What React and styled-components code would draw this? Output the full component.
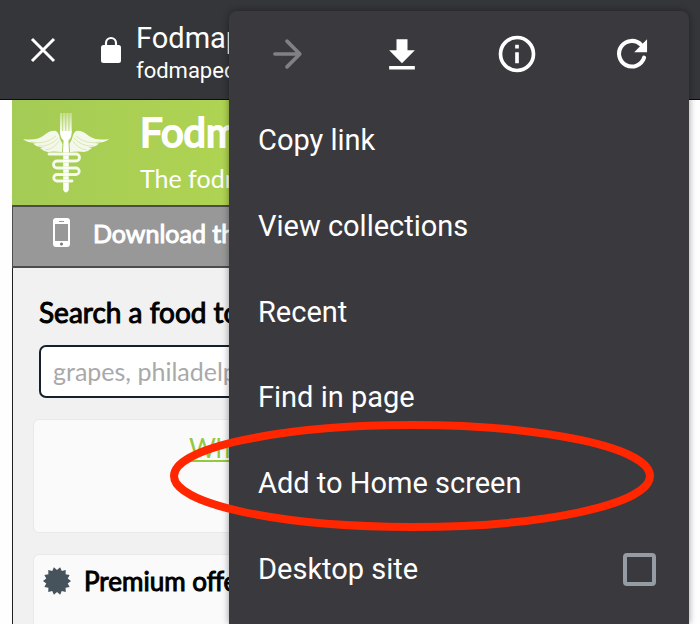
import styled, { createGlobalStyle } from 'styled-components';

const GlobalStyle = createGlobalStyle`
  * {
    box-sizing: border-box;
  }
  body {
    margin: 0;
    background-color: #fefefe;
    font-family: Lato, "Liberation Sans", sans-serif;
  }
  button {
    border: 0;
    padding: 0;
    background: none;
    color: inherit;
    font: inherit;
    cursor: pointer;
  }
  svg {
    display: block;
    flex: none;
  }
`

const Shell = styled.div`
  position: relative;
  height: 100vh;
  display: flex;
  flex-direction: column;
  overflow: hidden;
`

const BrowserBar = styled.header`
  flex: none;
  display: flex;
  align-items: center;
  height: 100px;
  padding: 0 30px;
  border-bottom: 1px solid #0c0c10;
  background-color: #353639;
  color: #fff;
  font-family: Roboto, sans-serif;
  white-space: nowrap;
`

const CloseButton = styled.button`
  margin-right: 44px;
`

const PageInfo = styled.div`
  margin-left: 14px;
  padding-top: 6px;
  .title {
    font-size: 29px;
    line-height: 36px;
  }
  .host {
    font-size: 22px;
    line-height: 30px;
  }
`

const Site = styled.div`
  flex: 1;
  min-height: 0;
  display: flex;
  flex-direction: column;
  margin: 0 12px;
  background-color: #f1f1f1;
  white-space: nowrap;
`

const Banner = styled.div`
  flex: none;
  display: flex;
  height: 105px;
  padding: 8px 11px;
  gap: 31px;
  background: linear-gradient(90deg, #a4cb55, #b0d452 240px);
  color: #fff;
  h1 {
    margin: 0;
    font-size: 40px;
    font-weight: 400;
    line-height: 48px;
    -webkit-text-stroke: 2px #fff;
  }
  p {
    margin: 0;
    font-size: 25px;
    line-height: 44px;
  }
`

const AppStrip = styled.a`
  flex: none;
  display: flex;
  align-items: center;
  height: 63px;
  padding: 0 40px 8px;
  gap: 22px;
  border: solid #4c4c4c;
  border-width: 2px 0 2px 1px;
  background-color: #989898;
  color: #fff;
  font-size: 25px;
  text-decoration: none;
  -webkit-text-stroke: 1px #fff;
`

const Content = styled.main`
  flex: 1;
  min-height: 0;
  display: flex;
  flex-direction: column;
  gap: 21px;
  padding: 27px 20px 0;
  border-left: 1px solid #222;
  overflow: hidden;
`

const SearchForm = styled.form`
  flex: none;
  display: flex;
  flex-direction: column;
  padding: 0 6px;
  label {
    margin-bottom: 16px;
    color: #000;
    font-size: 28px;
    line-height: 34px;
    -webkit-text-stroke: 1px #000;
  }
  input {
    height: 53px;
    padding: 0 12px 2px;
    border: 2px solid #16202c;
    border-radius: 7px;
    background-color: #fff;
    font: 25px Lato, sans-serif;
  }
  input::placeholder {
    color: #a9a9a9;
  }
`

const Card = styled.section`
  flex: none;
  height: 114px;
  padding: 11px 9px;
  border: 1px solid #e9e9e9;
  border-radius: 6px;
  background-color: #fafafa;
  a {
    display: block;
    margin-left: 146px;
    color: #94c83d;
    font-size: 26px;
    line-height: 34px;
  }
  h2 {
    display: flex;
    align-items: center;
    gap: 13px;
    margin: 0;
    font-size: 26px;
    font-weight: 400;
    line-height: 30px;
    -webkit-text-stroke: 1px #000;
  }
`

const Menu = styled.nav`
  position: absolute;
  top: 11px;
  right: 11px;
  bottom: 0;
  width: 460px;
  display: flex;
  flex-direction: column;
  padding-bottom: 12px;
  border-radius: 8px 8px 0 0;
  background-color: #3a393d;
  box-shadow: 0 0 7px rgba(0, 0, 0, 0.4);
  color: #fff;
  font-family: Roboto, sans-serif;
  font-size: 29px;
`

const IconRow = styled.div`
  flex: 1;
  display: flex;
  max-height: 86px;
`

const IconButton = styled.button`
  flex: 1;
  display: flex;
  align-items: center;
  justify-content: center;
  &:disabled {
    color: #818183;
  }
`

const MenuItem = styled.button`
  position: relative;
  flex: 1;
  display: flex;
  align-items: center;
  justify-content: space-between;
  max-height: 86px;
  padding: 0 33px 0 29px;
  text-align: left;
`

const Checkbox = styled.input`
  appearance: none;
  width: 33px;
  height: 33px;
  margin: 0;
  border: 4px solid #969ca3;
  border-radius: 4px;
`

const Ring = styled.svg`
  position: absolute;
  left: -60px;
  top: -20px;
  pointer-events: none;
`

const Logo = () => (
  <svg width="86" height="88" viewBox="0 0 86 88" fill="#fff" aria-hidden="true">
    <defs>
      <linearGradient id="tines" x1="0" y1="0" x2="0" y2="1">
        <stop offset="0" stopColor="#fff" stopOpacity="0.35" />
        <stop offset="1" stopColor="#fff" stopOpacity="0.95" />
      </linearGradient>
    </defs>
    <path d="M37 5h2.400v19H37zM40.100 5h2.400v19h-2.400zM43.200 5h2.400v19h-2.400zM46.300 5h2.400v19h-2.400z" fill="url(#tines)" />
    <path d="M37 23h11.800q0 7-3.400 9.500L46 44h-6l.600-11.500Q37 30 37 23z" />
    <g opacity="0.88">
      <path d="M0 31q13 2 20-3 7-6 13-5 3 2 4 8l2.500 5-.500 8q-9-1-14 0-5-1-8-4l4-.500q-7 0-11-4l4-.500Q4 35 0 31z" />
      <path d="M86 31q-13 2-20-3-7-6-13-5-3 2-4 8l-2.500 5 .500 8q9-1 14 0 5-1 8-4l-4-.500q7 0 11-4l-4-.500Q82 35 86 31z" />
    </g>
    <path d="M8 34q15 3 25-6M15 38q12 1 20-8M22 42q9-1 14-9M78 34q-15 3-25-6M71 38q-12 1-20-8M64 42q-9-1-14-9" fill="none" stroke="#a6cc54" strokeWidth="0.700" opacity="0.500" />
    <path d="M40.200 44h5.600v38q-2.800 5-5.600 0z" opacity="0.95" />
    <path d="M26 46h27a3.500 3.500 0 0 1 0 7H34a3.500 3.500 0 0 0 0 7h19a3.250 3.250 0 0 1 0 6.500H34a3.250 3.250 0 0 0 0 6.500h15" fill="none" stroke="#a6cc54" strokeWidth="4" opacity="0.400" />
    <path d="M26 46h27a3.500 3.500 0 0 1 0 7H34a3.500 3.500 0 0 0 0 7h19a3.250 3.250 0 0 1 0 6.500H34a3.250 3.250 0 0 0 0 6.500h15" fill="none" stroke="#fff" strokeWidth="2.800" opacity="0.9" strokeLinecap="round" />
  </svg>
)

// 14 spikes, two of them at the top
const sealPoints = Array.from({ length: 28 }, (_, i) => {
  const r = i % 2 ? 14 : 11
  const a = (Math.PI * i) / 14
  return `${14 + r * Math.sin(a)},${14 - r * Math.cos(a)}`
}).join(' ')

const items = ['Copy link', 'View collections', 'Recent', 'Find in page', 'Add to Home screen']

export default function App() {
  return (
    <>
      <GlobalStyle />
      <Shell>
        <BrowserBar>
          <CloseButton aria-label="Close">
            <svg width="26" height="26" viewBox="0 0 26 26" stroke="#fff" strokeWidth="3">
              <path d="M2 2l22 22M24 2L2 24" />
            </svg>
          </CloseButton>
          <svg width="22" height="28" viewBox="0 0 22 28">
            <rect x="1" y="9" width="20" height="18" rx="2.500" fill="#fff" />
            <path d="M6 10V7a5 5 0 0 1 10 0v3" fill="none" stroke="#fff" strokeWidth="2.200" />
          </svg>
          <PageInfo>
            <div className="title">Fodmap</div>
            <div className="host">fodmaped</div>
          </PageInfo>
        </BrowserBar>

        <Site>
          <Banner>
            <Logo />
            <div>
              <h1>Fodm</h1>
              <p>The fodm</p>
            </div>
          </Banner>
          <AppStrip href="#app">
            <svg width="18" height="30" viewBox="0 0 18 30">
              <rect width="17" height="29" rx="3" fill="#fff" />
              <path d="M2 6h13v17H2zM6 3h5v1H6z" fill="#989898" />
              <circle cx="8.500" cy="26" r="1.500" fill="#777" />
            </svg>
            Download the
          </AppStrip>
          <Content>
            <SearchForm>
              <label htmlFor="food">Search a food to</label>
              <input id="food" type="text" placeholder="grapes, philadelp" />
            </SearchForm>
            <Card>
              <a href="#what">Wha</a>
            </Card>
            <Card>
              <h2>
                <svg width="28" height="28" viewBox="0 0 28 28">
                  <polygon points={sealPoints} fill="#46525c" />
                </svg>
                Premium offe
              </h2>
            </Card>
          </Content>
        </Site>

        <Menu>
          <IconRow>
            <IconButton aria-label="Forward" disabled>
              <svg width="44" height="44" viewBox="0 0 24 24" fill="none" stroke="currentColor" strokeWidth="2" strokeLinecap="round" strokeLinejoin="round">
                <path d="M5.400 12H19M12 5l7 7-7 7" />
              </svg>
            </IconButton>
            <IconButton aria-label="Download">
              <svg width="44" height="44" viewBox="0 0 24 24" fill="currentColor">
                <path d="M19 10h-4V4H9v6H5l7 7zM5 18.500v2h14v-2z" />
              </svg>
            </IconButton>
            <IconButton aria-label="Page info">
              <svg width="44" height="44" viewBox="0 0 24 24" fill="currentColor">
                <circle cx="12" cy="12" r="9" fill="none" stroke="currentColor" strokeWidth="2" />
                <path d="M11 7h2v2h-2zM11 11h2v6h-2z" />
              </svg>
            </IconButton>
            <IconButton aria-label="Reload">
              <svg width="44" height="44" viewBox="0 0 24 24" fill="currentColor">
                <path d="M18.600 14A7 7 0 1 1 17 7" fill="none" stroke="currentColor" strokeWidth="2.200" strokeLinecap="round" />
                <path d="M20.200 4v7h-7z" />
              </svg>
            </IconButton>
          </IconRow>
          {items.map(item => (
            <MenuItem key={item}>
              {item}
              {item === 'Add to Home screen' && (
                <Ring width="486" height="112" viewBox="0 0 486 112">
                  <ellipse cx="243" cy="56" rx="238" ry="51" fill="none" stroke="#ff2600" strokeWidth="8" />
                </Ring>
              )}
            </MenuItem>
          ))}
          <MenuItem as="label">
            Desktop site
            <Checkbox type="checkbox" />
          </MenuItem>
        </Menu>
      </Shell>
    </>
  )
}
